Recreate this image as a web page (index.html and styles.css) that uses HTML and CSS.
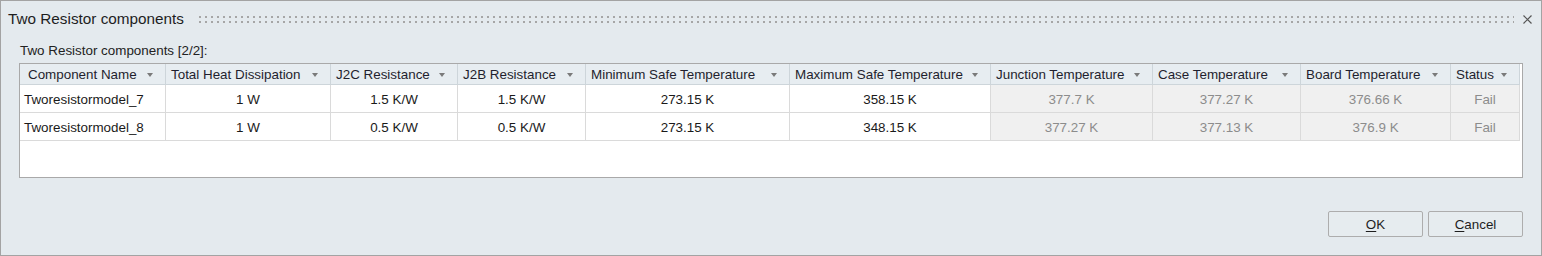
FILE: index.html
```html
<!DOCTYPE html>
<html lang="en">
<head>
    <meta charset="UTF-8">
    <title>Two Resistor components</title>
    <link rel="stylesheet" href="styles.css">
</head>
<body>
    <div class="dialog">
        <!-- Title bar -->
        <div class="titlebar">
            <div class="title">Two Resistor components</div>
            <div class="grip">
                <div class="grip-row"></div>
                <div class="grip-row"></div>
            </div>
            <svg class="close" width="9" height="9" viewBox="0 0 9 9">
                <path d="M0.5 0.5 L8.5 8.5 M8.5 0.5 L0.5 8.5" stroke="#555" stroke-width="1.2" fill="none"/>
            </svg>
        </div>

        <div class="content">
            <div class="caption">Two Resistor components [2/2]:</div>

            <div class="grid-wrap">
                <table class="grid">
                    <thead>
                        <tr>
                            <th class="c1"><div class="hd"><span>Component Name</span><span class="sort"></span></div></th>
                            <th class="c2"><div class="hd"><span>Total Heat Dissipation</span><span class="sort"></span></div></th>
                            <th class="c3"><div class="hd"><span>J2C Resistance</span><span class="sort"></span></div></th>
                            <th class="c4"><div class="hd"><span>J2B Resistance</span><span class="sort"></span></div></th>
                            <th class="c5"><div class="hd"><span>Minimum Safe Temperature</span><span class="sort"></span></div></th>
                            <th class="c6"><div class="hd"><span>Maximum Safe Temperature</span><span class="sort"></span></div></th>
                            <th class="c7"><div class="hd"><span>Junction Temperature</span><span class="sort"></span></div></th>
                            <th class="c8"><div class="hd"><span>Case Temperature</span><span class="sort"></span></div></th>
                            <th class="c9"><div class="hd"><span>Board Temperature</span><span class="sort"></span></div></th>
                            <th class="c10"><div class="hd"><span>Status</span><span class="sort"></span></div></th>
                        </tr>
                    </thead>
                    <tbody>
                        <tr>
                            <td class="name">Tworesistormodel_7</td>
                            <td>1 W</td>
                            <td>1.5 K/W</td>
                            <td>1.5 K/W</td>
                            <td>273.15 K</td>
                            <td>358.15 K</td>
                            <td class="ro">377.7 K</td>
                            <td class="ro">377.27 K</td>
                            <td class="ro">376.66 K</td>
                            <td class="ro">Fail</td>
                        </tr>
                        <tr>
                            <td class="name">Tworesistormodel_8</td>
                            <td>1 W</td>
                            <td>0.5 K/W</td>
                            <td>0.5 K/W</td>
                            <td>273.15 K</td>
                            <td>348.15 K</td>
                            <td class="ro">377.27 K</td>
                            <td class="ro">377.13 K</td>
                            <td class="ro">376.9 K</td>
                            <td class="ro">Fail</td>
                        </tr>
                    </tbody>
                </table>
            </div>
        </div>

        <!-- Buttons -->
        <div class="footer">
            <button class="btn"><u>O</u>K</button>
            <button class="btn"><u>C</u>ancel</button>
        </div>
    </div>
</body>
</html>
```

FILE: styles.css
```css
body {
    margin: 0;
    padding: 0;
    background: #e4eaee;
    font-family: 'Liberation Sans', Arial, sans-serif;
    color: #222;
}

.dialog {
    width: 1542px;
    height: 256px;
    box-sizing: border-box;
    border: 1px solid #a3a3a3;
    background: #e4eaee;
    display: flex;
    flex-direction: column;
}

/* Title bar */
.titlebar {
    height: 36px;
    display: flex;
    align-items: center;
    padding: 0 9px 0 7px;
}

.title {
    font-size: 15.3px;
    color: #1e1e1e;
    white-space: nowrap;
}

.grip {
    flex: 1;
    margin: 0 9px 0 15px;
    display: flex;
    flex-direction: column;
    gap: 3px;
}

.grip-row {
    height: 2px;
    background: repeating-linear-gradient(90deg, #a6a6a6 0 2px, transparent 2px 6px);
}

.close {
    display: block;
}

/* Content */
.content {
    padding: 0 18px;
}

.caption {
    font-size: 13.4px;
    line-height: 16px;
    margin: 6px 0 4px 1px;
}

.grid-wrap {
    height: 115px;
    box-sizing: border-box;
    border: 1px solid #a9a9a9;
    background: #fff;
}

.grid {
    table-layout: fixed;
    width: 1500px;
    border-collapse: separate;
    border-spacing: 0;
    font-size: 13.4px;
}

.grid th,
.grid td {
    box-sizing: border-box;
    padding: 0;
    white-space: nowrap;
    overflow: hidden;
}

.grid th {
    height: 21px;
    background: #e7edf1;
    font-weight: normal;
    text-align: left;
    border-right: 1px solid #cdd5da;
    border-bottom: 1px solid #cdd5da;
}

.hd {
    display: flex;
    align-items: center;
    justify-content: space-between;
    padding: 1px 12px 0 5px;
    color: #1f1f2e;
}

.c1 .hd {
    padding-left: 8px;
}

.sort {
    width: 0;
    height: 0;
    border-left: 3.5px solid transparent;
    border-right: 3.5px solid transparent;
    border-top: 4px solid #7a7a7a;
}

.c1 { width: 146px; }
.c2 { width: 165px; }
.c3 { width: 127px; }
.c4 { width: 128px; }
.c5 { width: 204px; }
.c6 { width: 201px; }
.c7 { width: 162px; }
.c8 { width: 148px; }
.c9 { width: 150px; }
.c10 { width: 69px; }

.grid td {
    height: 28px;
    padding-top: 1px;
    text-align: center;
    color: #1a1a1a;
    border-right: 1px solid #dadada;
    border-bottom: 1px solid #dadada;
}

.grid td.name {
    text-align: left;
    padding-left: 4px;
}

.grid td.ro {
    background: #f0f0f0;
    color: #8c8c8c;
}

/* Footer */
.footer {
    margin-top: auto;
    display: flex;
    justify-content: flex-end;
    gap: 5px;
    padding: 0 18px 18px 0;
}

.btn {
    width: 95px;
    height: 26px;
    border: 1px solid #adadad;
    border-radius: 2px;
    background: #e6ecef;
    font-family: 'Liberation Sans', Arial, sans-serif;
    font-size: 13.4px;
    color: #1e1e1e;
    padding: 0;
}

.btn u {
    text-decoration-thickness: 1px;
    text-underline-offset: 2px;
}
```
